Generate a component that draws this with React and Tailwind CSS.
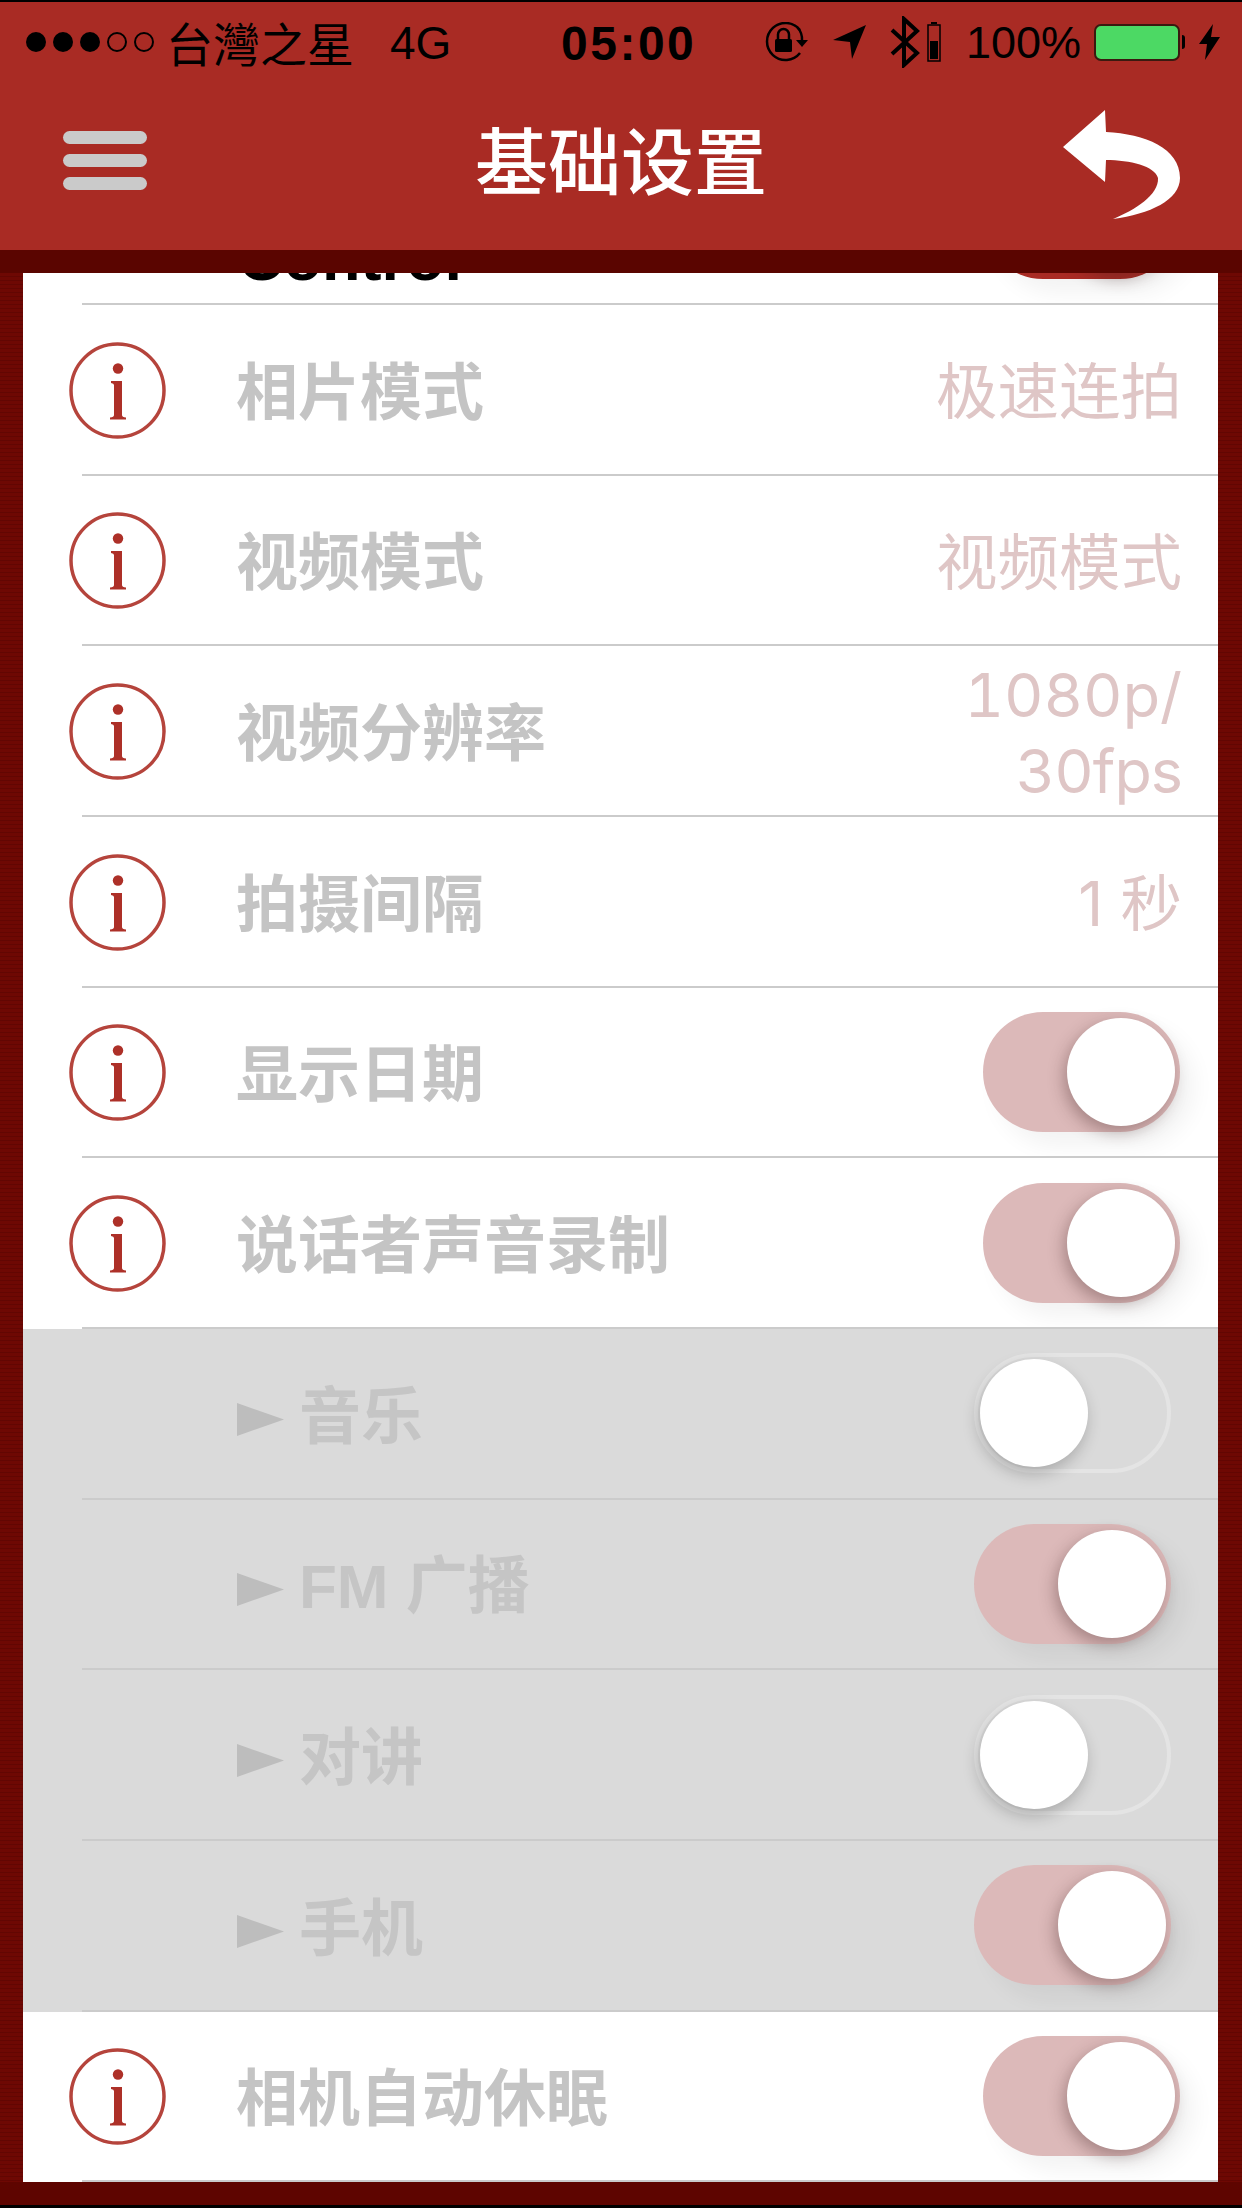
const CJK = "font-['Inter','Noto_Sans_CJK_SC',sans-serif]";

function Info() {
  return (
    <svg width="97" height="97" viewBox="0 0 97 97" className="shrink-0">
      <circle cx="48.5" cy="48.5" r="46.5" fill="none" stroke="#b5443c" strokeWidth="3.5" />
      <circle cx="49" cy="26.5" r="5.2" fill="#ad3028" />
      <path d="M42 39 L53 39 L53 73 Q53 75 57 75.5 L57 77.5 L41 77.5 L41 75.5 Q45 75 45 73 L45 43 Q45 41.5 42 41 Z" fill="#ad3028" />
    </svg>
  );
}

function Toggle({ on, color = "bg-[#dcb9b9]" }) {
  return on ? (
    <div className={`w-[197px] h-[120px] rounded-full ${color} flex items-center justify-end pr-[5px] shrink-0 shadow-[14px_14px_22px_rgba(0,0,0,0.05)]`}>
      <div className="w-[108px] h-[108px] rounded-full bg-white shadow-[-3px_6px_16px_rgba(60,30,30,0.34)]" />
    </div>
  ) : (
    <div className="w-[197px] h-[120px] rounded-full border-[4px] border-[#e4e4e4] flex items-center justify-start pl-[2px] shrink-0">
      <div className="w-[108px] h-[108px] rounded-full bg-white shadow-[-2px_7px_16px_rgba(0,0,0,0.22)]" />
    </div>
  );
}

function Row({ children, gray, first }) {
  return (
    <div className={`relative h-[170.67px] shrink-0 flex items-center ${gray ? "bg-[#dadada]" : "bg-white"} ${first ? "mt-[-138.67px]" : ""}`}>
      {children}
      <div className="absolute left-[59px] right-0 bottom-0 h-[2px] bg-[#cbcbcb]" />
    </div>
  );
}

function Label({ children, gray }) {
  return (
    <div className={`text-[62px] leading-[70px] font-bold whitespace-nowrap mt-[5px] ${gray ? "text-[#c5c5c5]" : "text-[#c4c4c4]"}`}>{children}</div>
  );
}

function InfoRow({ label, value, toggle, lines }) {
  return (
    <Row>
      <div className="ml-[46px] mr-[70px] flex"><Info /></div>
      <Label>{label}</Label>
      {toggle ? (
        <div className="ml-auto mr-[38px] mb-[2px] flex"><Toggle on /></div>
      ) : (
        <div className="ml-auto mr-[36px] flex items-center">
          {lines ? (
            <div className="text-right text-[61px] leading-[76px] tabular-nums text-[#dfc6c6] mt-[3px]">
              <div>{lines[0]}</div>
              <div className="tracking-[-1px]">{lines[1]}</div>
            </div>
          ) : (
            <div className="text-[61.5px] leading-[70px] text-[#dfc6c6] whitespace-nowrap mt-[4px]">{value}</div>
          )}
        </div>
      )}
    </Row>
  );
}

function SubRow({ label, on, latin }) {
  return (
    <Row gray>
      <div className="ml-[214px] mr-[15px] mt-[10px] flex">
        <svg width="47" height="33" viewBox="0 0 47 33"><path d="M0 0 L47 16.5 L0 33 Z" fill="#bdbdbd" /></svg>
      </div>
      <div className={latin ? "font-['Liberation_Sans','Noto_Sans_CJK_SC',sans-serif]" : ""}>
        <Label gray>{label}</Label>
      </div>
      <div className="ml-auto mr-[47px] mb-[2px] flex"><Toggle on={on} /></div>
    </Row>
  );
}

function StatusBar() {
  return (
    <div className="h-[78px] pt-[2px] flex items-center text-black font-['Liberation_Sans',sans-serif]">
      <div className="ml-[26px] w-[134px] flex items-center gap-[7px] shrink-0">
        <div className="w-5 h-5 rounded-full bg-black" />
        <div className="w-5 h-5 rounded-full bg-black" />
        <div className="w-5 h-5 rounded-full bg-black" />
        <div className="w-5 h-5 rounded-full border-2 border-black" />
        <div className="w-5 h-5 rounded-full border-2 border-black" />
      </div>
      <div className="ml-[6px] w-[224px] text-[47px] leading-[50px] font-['Noto_Sans_CJK_TC',sans-serif] whitespace-nowrap">台灣之星</div>
      <div className="w-[171px] mt-[2px] text-[46px] leading-[50px] whitespace-nowrap">4G</div>
      <div className="w-[203px] mt-[3px] text-[48px] leading-[50px] font-bold tracking-[2.5px] whitespace-nowrap">05:00</div>
      <svg width="44" height="40" viewBox="0 0 44 40" className="shrink-0">
        <path d="M36 8 A18.5 18.5 0 1 0 36 31" fill="none" stroke="#000" strokeWidth="2.5" />
        <path d="M33 5 A18 18 0 0 1 38 19" fill="none" stroke="#000" strokeWidth="2.5" />
        <path d="M32 18 L44 18 L38 25 Z" fill="#000" />
        <rect x="11" y="17" width="17" height="13" rx="1.5" fill="#000" />
        <path d="M14 17 V12.5 A5.5 5.5 0 0 1 25 12.5 V17" fill="none" stroke="#000" strokeWidth="2.5" />
      </svg>
      <svg width="33" height="34" viewBox="0 0 33 34" className="ml-[25px] shrink-0">
        <path d="M0 15 L33 0 L19 34 L17 17 Z" fill="#000" />
      </svg>
      <svg width="30" height="52" viewBox="0 0 30 52" className="ml-[24px] shrink-0">
        <path d="M2 14 L27 37 L14 49 L14 3 L27 15 L2 38" fill="none" stroke="#000" strokeWidth="4" />
      </svg>
      <svg width="14" height="40" viewBox="0 0 14 40" className="ml-[7px] shrink-0">
        <rect x="4" y="0" width="6" height="2" fill="#000" />
        <rect x="1" y="3" width="12" height="36" fill="none" stroke="#000" strokeWidth="1.5" />
        <rect x="3" y="19" width="8" height="18" fill="#000" />
      </svg>
      <div className="ml-[25px] w-[128px] mt-[2px] text-[45px] leading-[50px] whitespace-nowrap">100%</div>
      <div className="w-[86px] h-[37px] rounded-[7px] border-2 border-[#3a1a10] bg-[#4cd964] shrink-0" />
      <div className="w-[3px] h-[14px] rounded-r-full bg-black ml-[2px] shrink-0" />
      <svg width="21" height="36" viewBox="0 0 21 36" className="ml-[14px] shrink-0">
        <path d="M14 0 L0 20 L8 20 L6 36 L21 13 L12 13 Z" fill="#000" />
      </svg>
    </div>
  );
}

function NavBar() {
  return (
    <div className="h-[170px] flex items-start">
      <div className="ml-[63px] mt-[51px] w-[84px] flex flex-col gap-[10px] shrink-0">
        <div className="h-[13px] rounded-full bg-[#cacaca]" />
        <div className="h-[13px] rounded-full bg-[#cacaca]" />
        <div className="h-[13px] rounded-full bg-[#cacaca]" />
      </div>
      <div className="ml-[328px] mt-[38px] text-[73px] leading-[90px] font-medium text-white whitespace-nowrap">基础设置</div>
      <svg width="120" height="112" viewBox="1063 110 120 112" className="ml-[296px] mt-[30px] shrink-0">
        <path d="M1063 147 L1105 110 L1106 132 C1145 134 1180 148 1180 178 C1180 200 1150 214 1113 219 C1135 210 1159 195 1158 178 C1155 166 1130 160 1106 160 L1105 182 Z" fill="#fff" />
      </svg>
    </div>
  );
}

export default function App() {
  return (
    <div className={`w-[1242px] h-[2208px] overflow-hidden flex flex-col bg-[repeating-linear-gradient(0deg,#6e0803_0px,#6e0803_3px,#620602_3px,#620602_4px)] ${CJK}`}>
      <div className="h-[2px] bg-black shrink-0" />
      <div className="h-[248px] bg-[#a92b24] shrink-0">
        <StatusBar />
        <NavBar />
      </div>
      <div className="h-[23px] bg-[#5a0500] shrink-0" />
      <div className="mx-[23px] w-[1195px] h-[1909px] overflow-hidden flex flex-col bg-white shrink-0">
        <Row first>
          <div className="ml-[215px] mt-[76px] text-[63px] leading-[70px] font-bold text-black font-['Liberation_Sans',sans-serif]">Control</div>
          <div className="ml-auto mr-[38px] mb-[2px] flex"><Toggle on color="bg-[#a92b24]" /></div>
        </Row>
        <InfoRow label="相片模式" value="极速连拍" />
        <InfoRow label="视频模式" value="视频模式" />
        <InfoRow label="视频分辨率" lines={["1080p/", "30fps"]} />
        <InfoRow label="拍摄间隔" value="1 秒" />
        <InfoRow label="显示日期" toggle />
        <InfoRow label="说话者声音录制" toggle />
        <SubRow label="音乐" />
        <SubRow label="FM 广播" on latin />
        <SubRow label="对讲" />
        <SubRow label="手机" on />
        <InfoRow label="相机自动休眠" toggle />
      </div>
      <div className="flex-1 bg-[#5e0500]" />
      <div className="h-[3px] bg-black shrink-0" />
    </div>
  );
}
